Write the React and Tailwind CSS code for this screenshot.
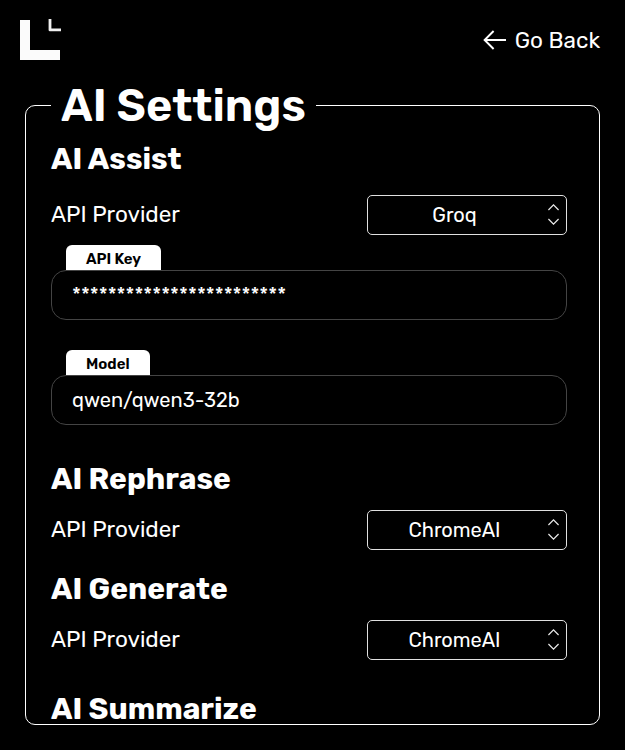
import React from "react";

function Logo() {
  return (
    <svg width="42" height="42" viewBox="0 0 42 42" fill="none" className="block">
      <path d="M0 1H10V31H40V41H0Z" fill="#fbfbfb" />
      <path d="M30 0V10.9H41" stroke="#f0f0f0" strokeWidth="2.8" strokeLinejoin="round" />
    </svg>
  );
}

function BackArrow() {
  return (
    <svg width="24" height="20" viewBox="0 0 24 20" fill="none" stroke="#fff" strokeWidth="1.9" className="block">
      <path d="M23 10H1.6M10.6 1L1.6 10L10.6 19" />
    </svg>
  );
}

function Select({ value }) {
  return (
    <button className="relative flex h-10 w-[200px] items-center justify-center rounded-[5px] border border-[#e0e0e0] pr-[25px] text-[20px] leading-none">
      <span>{value}</span>
      <svg width="11" height="22" viewBox="0 0 11 22" fill="none" stroke="#e8e8e8" strokeWidth="1.3" className="absolute right-[7px] top-[8px]">
        <path d="M0.4 6L5.5 0.9L10.6 6M0.4 15L5.5 20.1L10.6 15" />
      </svg>
    </button>
  );
}

function ProviderRow({ value }) {
  return (
    <div className="flex h-10 items-center justify-between">
      <span className="text-[22.5px] leading-none">API Provider</span>
      <Select value={value} />
    </div>
  );
}

function Field({ label, children }) {
  return (
    <div className="flex flex-col">
      <div className="ml-[15px] flex h-[25px] items-center self-start rounded-t-[6px] bg-white px-5 pt-[3px] text-[15px] font-semibold leading-none text-black">
        {label}
      </div>
      <div className="h-[50px] rounded-[15px] border border-[#444] px-5 text-[20px] leading-[48px]">{children}</div>
    </div>
  );
}

function Heading({ children, className }) {
  return <h2 className={`text-[30px] font-bold leading-[36px] ${className}`}>{children}</h2>;
}

export default function App() {
  return (
    <div className="flex h-[750px] w-[625px] flex-col overflow-hidden bg-black font-['Rubik','Roboto',sans-serif] text-white">
      <header className="flex h-[79px] shrink-0 items-start justify-between pl-5 pr-[25px] pt-[19px]">
        <Logo />
        <a className="mt-[9px] flex items-start gap-2 text-[22.5px] leading-[24px]">
          <span className="pt-[2px]">
            <BackArrow />
          </span>
          <span className="pt-px">Go Back</span>
        </a>
      </header>
      <fieldset className="mx-[25px] h-[646px] rounded-[10px] border border-white pl-[25px] pr-8">
        <legend className="h-[53px] whitespace-nowrap px-[10px] text-[45px] font-semibold leading-[53px]">AI Settings</legend>
        <div className="h-[592px] pt-[9px]">
          <Heading className="mb-[18px]">AI Assist</Heading>
          <ProviderRow value="Groq" />
          <div className="mt-[10px] flex flex-col gap-[30px]">
            <Field label="API Key">************************</Field>
            <Field label="Model">qwen/qwen3-32b</Field>
          </div>
          <Heading className="mb-[13px] mt-[36px]">AI Rephrase</Heading>
          <ProviderRow value="ChromeAI" />
          <Heading className="mb-[13px] mt-[21px]">AI Generate</Heading>
          <ProviderRow value="ChromeAI" />
          <Heading className="mt-[31px]">AI Summarize</Heading>
        </div>
      </fieldset>
    </div>
  );
}
